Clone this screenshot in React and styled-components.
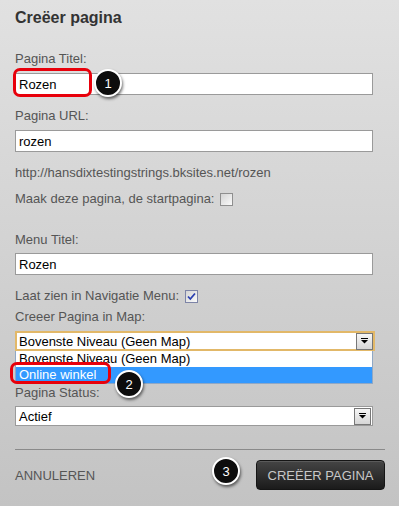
import React from "react";
import styled, { createGlobalStyle } from "styled-components";

const Global = createGlobalStyle`
  html, body { margin: 0; padding: 0; }
  body { font-family: "Liberation Sans", Arial, sans-serif; }
`;

const Panel = styled.div`
  position: relative;
  width: 399px;
  height: 506px;
  box-sizing: border-box;
  padding: 8px 14px 0 15px;
  background: linear-gradient(#e1e1e1, #c3c3c3);
  font-family: "Liberation Sans", Arial, sans-serif;
  display: flex;
  flex-direction: column;
  overflow: hidden;
`;

const Title = styled.h1`
  margin: 0;
  font-size: 16px;
  line-height: 20px;
  font-weight: bold;
  color: #333;
`;

const Form = styled.div`
  width: 358px;
  display: flex;
  flex-direction: column;
  margin-top: 23px;
`;

const Label = styled.div`
  margin-top: ${(p) => p.$mt || 0}px;
  font-size: 13px;
  line-height: 16px;
  color: #555;
  display: flex;
  align-items: center;
  gap: 6px;
`;

const TextInput = styled.input`
  margin: ${(p) => p.$mt || 0}px 0 0;
  box-sizing: border-box;
  width: 100%;
  height: 22px;
  border: 1px solid #9a9a9a;
  background: #fff;
  padding: 0 3px;
  font-family: "Liberation Sans", Arial, sans-serif;
  font-size: 13px;
  color: #000;
  outline: none;
`;

const Box = styled.span`
  width: 13px;
  height: 13px;
  box-sizing: border-box;
  border: 1px solid ${(p) => (p.$checked ? "#7d84a6" : "#8f8f8f")};
  background: linear-gradient(135deg, #d4d4d4, #fafafa);
  display: inline-flex;
  align-items: center;
  justify-content: center;
  margin-top: 1px;
`;

const SelectBox = styled.div`
  position: relative;
  margin-top: ${(p) => p.$mt || 0}px;
  box-sizing: border-box;
  width: ${(p) => (p.$focus ? "360px" : "358px")};
  height: 20px;
  border: ${(p) => (p.$focus ? "2px solid #e2b868" : "1px solid #9a9a9a")};
  background: #fff;
  display: flex;
  align-items: center;
  justify-content: space-between;
  padding-left: ${(p) => (p.$focus ? 2 : 3)}px;
  font-size: 13px;
  color: #000;
`;

const ArrowBtn = styled.span`
  width: 17px;
  height: 17px;
  box-sizing: border-box;
  margin-right: ${(p) => (p.$focus ? 0 : 1)}px;
  border: 1px solid #777;
  background: linear-gradient(#f6f6f6, #d6d6d6);
  display: flex;
  align-items: center;
  justify-content: center;
`;

const DropList = styled.div`
  position: absolute;
  left: -2px;
  top: 18px;
  width: 358px;
  box-sizing: border-box;
  border: 1px solid #8fa8c6;
  border-top: none;
  background: #fff;
  z-index: 2;
`;

const Option = styled.div`
  height: 16px;
  line-height: 16px;
  padding-left: 3px;
  font-size: 13px;
  color: ${(p) => (p.$active ? "#fff" : "#000")};
  background: ${(p) => (p.$active ? "#3399ff" : "#fff")};
`;

const Divider = styled.div`
  margin-top: 23px;
  height: 0;
  border-top: 1px solid #8a8a8a;
`;

const Footer = styled.div`
  margin-top: 10px;
  display: flex;
  align-items: center;
  justify-content: space-between;
`;

const Cancel = styled.span`
  font-size: 13px;
  color: #555;
  margin-top: 1px;
`;

const PrimaryButton = styled.button`
  width: 129px;
  height: 30px;
  border: 1px solid #151515;
  border-radius: 4px;
  background: linear-gradient(#454545, #1b1b1b);
  box-shadow: inset 0 1px 0 rgba(255, 255, 255, 0.12);
  color: #c8c8c8;
  font-family: "Liberation Sans", Arial, sans-serif;
  font-size: 13px;
  padding: 0;
`;

const Highlight = styled.div`
  position: absolute;
  left: ${(p) => p.$x}px;
  top: ${(p) => p.$y}px;
  width: ${(p) => p.$w}px;
  height: ${(p) => p.$h}px;
  box-sizing: border-box;
  border: 3px solid #e8000b;
  border-radius: 7px;
  z-index: 3;
`;

const Badge = styled.div`
  position: absolute;
  left: ${(p) => p.$x - 14}px;
  top: ${(p) => p.$y - 14}px;
  width: 28px;
  height: 28px;
  box-sizing: border-box;
  border-radius: 50%;
  border: 2px solid #fff;
  background: #0d0d0d;
  box-shadow: 1px 2px 3px rgba(0, 0, 0, 0.55);
  color: #fff;
  font-size: 13px;
  display: flex;
  align-items: center;
  justify-content: center;
  z-index: 4;
`;

const Arrow = () => (
  <svg width="9" height="6" viewBox="0 0 9 6">
    <rect x="1" y="0" width="7" height="1" fill="#000" />
    <path d="M1 2 H8 L4.5 5.5 Z" fill="#000" />
  </svg>
);

const Check = () => (
  <svg width="11" height="11" viewBox="0 0 11 11">
    <path d="M2 5.5 L4.3 8 L9 2.5" fill="none" stroke="#2a3fb0" strokeWidth="1.8" />
  </svg>
);

export default function App() {
  return (
    <>
      <Global />
      <Panel>
        <Title>Creëer pagina</Title>
        <Form>
          <Label>Pagina Titel:</Label>
          <TextInput $mt={6} defaultValue="Rozen" readOnly />
          <Label $mt={13}>Pagina URL:</Label>
          <TextInput $mt={6} defaultValue="rozen" readOnly />
          <Label $mt={13}>http://hansdixtestingstrings.bksites.net/rozen</Label>
          <Label $mt={10}>
            Maak deze pagina, de startpagina:
            <Box />
          </Label>
          <Label $mt={25}>Menu Titel:</Label>
          <TextInput $mt={5} defaultValue="Rozen" readOnly />
          <Label $mt={13}>
            Laat zien in Navigatie Menu:
            <Box $checked>
              <Check />
            </Box>
          </Label>
          <Label $mt={5}>Creeer Pagina in Map:</Label>
          <SelectBox $mt={6} $focus>
            Bovenste Niveau (Geen Map)
            <ArrowBtn $focus>
              <Arrow />
            </ArrowBtn>
            <DropList>
              <Option>Bovenste Niveau (Geen Map)</Option>
              <Option $active>Online winkel</Option>
            </DropList>
          </SelectBox>
          <Label $mt={34}>Pagina Status:</Label>
          <SelectBox $mt={5}>
            Actief
            <ArrowBtn>
              <Arrow />
            </ArrowBtn>
          </SelectBox>
        </Form>
        <Divider />
        <Footer>
          <Cancel>ANNULEREN</Cancel>
          <PrimaryButton>CREËER PAGINA</PrimaryButton>
        </Footer>
        <Highlight $x={13} $y={68} $w={79} $h={29} />
        <Highlight $x={10} $y={362} $w={101} $h={22} />
        <Badge $x={108} $y={83}>1</Badge>
        <Badge $x={129} $y={384}>2</Badge>
        <Badge $x={226} $y={471}>3</Badge>
      </Panel>
    </>
  );
}
